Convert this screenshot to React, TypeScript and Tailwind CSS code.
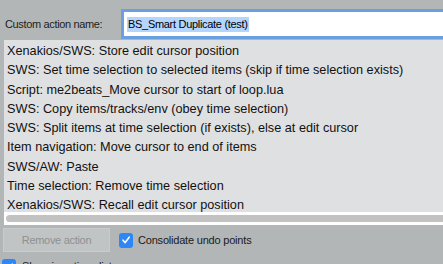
const actions = [
  'Xenakios/SWS: Store edit cursor position',
  'SWS: Set time selection to selected items (skip if time selection exists)',
  'Script: me2beats_Move cursor to start of loop.lua',
  'SWS: Copy items/tracks/env (obey time selection)',
  'SWS: Split items at time selection (if exists), else at edit cursor',
  'Item navigation: Move cursor to end of items',
  'SWS/AW: Paste',
  'Time selection: Remove time selection',
  'Xenakios/SWS: Recall edit cursor position',
];

function Check({ className = '' }: { className?: string }) {
  return (
    <span className={`flex h-[15px] w-[14px] shrink-0 items-center justify-center rounded-[3px] bg-[#2f86f6] ${className}`}>
      <svg width="10" height="10" viewBox="0 0 10 10" fill="none">
        <path d="M2 5.2 L4.2 7.6 L8.2 2.2" stroke="white" strokeWidth="1.6" strokeLinecap="round" strokeLinejoin="round" />
      </svg>
    </span>
  );
}

export default function App() {
  return (
    <div
      className="h-[264px] w-[443px] overflow-hidden bg-[#b3b6b6] text-[#1a1a1a]"
      style={{ fontFamily: '"Liberation Sans", Arial, sans-serif' }}
    >
      {/* Name row */}
      <div className="flex items-center pt-[9px]">
        <span className="w-[121px] pl-[5px] text-[11px] tracking-[-0.35px] text-[#222]">Custom action name:</span>
        <div className="flex h-[30px] flex-1 items-center border-[3px] border-r-0 border-[#6a9fe0] bg-white pl-[3px]">
          <span className="bg-[#b4d5fe] px-[1px] text-[11px] leading-[15px] tracking-[-0.3px] text-black">BS_Smart Duplicate (test)</span>
        </div>
      </div>

      {/* Action list */}
      <div className="ml-[4px] mt-[1px] bg-[#dfe0e1] pt-[2px]">
        {actions.map((a) => (
          <div key={a} className="flex h-[19.25px] items-center whitespace-nowrap pl-[3px] text-[12.7px] text-[#111]">
            {a}
          </div>
        ))}
        <div className="-mt-[3px] bg-white py-[3px] pl-[2px]">
          <div className="h-[7px] rounded-l-full bg-[#c2c2c2]" />
        </div>
      </div>

      {/* Bottom controls */}
      <div className="mt-[3px] flex items-center pl-[3px]">
        <button className="h-[24px] w-[107px] border border-[#c9cccc] bg-[#c1c4c4] text-[11px] tracking-[-0.3px] text-[#8e9191]">
          Remove action
        </button>
        <Check className="ml-[9px]" />
        <span className="ml-[5px] text-[11px] tracking-[-0.2px] text-[#1a1a1a]">Consolidate undo points</span>
      </div>
      <div className="mt-[6px] flex items-center gap-[6px] pl-[2px]">
        <Check />
        <span className="text-[11px] tracking-[-0.2px]">Show in actions list</span>
      </div>
    </div>
  );
}
